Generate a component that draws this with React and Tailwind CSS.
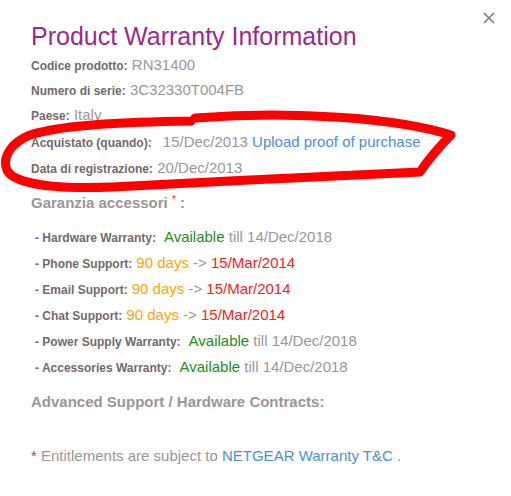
const label = "font-bold text-[12px] leading-none text-[#726a6c]";
const val = "text-[15px] leading-none text-[#9b9598]";

const Row = ({ name, children, className = "" }) => (
  <div className={`text-[15px] leading-[25px] ${className}`}>
    <span className={label}>{name}</span> {children}
  </div>
);

const Item = ({ name, children }) => (
  <li className="text-[15px] leading-[26px]">
    <span className={label}>- {name}</span>
    {children}
  </li>
);

const Available = () => (
  <>
    <span className="ml-[8px] leading-none text-[#1d8f1d]">Available</span>
    <span className={val}> till 14/Dec/2018</span>
  </>
);

const Days = () => (
  <>
    <span className="ml-[4px] leading-none text-[#ffa500]">90 days</span>
    <span className={val}> -&gt; </span>
    <span className="leading-none text-[#f52222]">15/Mar/2014</span>
  </>
);

export default function App() {
  return (
    <div className="relative w-[511px] h-[496px] bg-white overflow-hidden font-['Liberation_Sans',Arial,sans-serif]">
      <button className="absolute right-[16px] top-[12px] w-[12px] h-[12px] text-[#7b7b7b]">
        <svg viewBox="0 0 12 12" width="12" height="12" stroke="currentColor" strokeWidth="1.6" fill="none">
          <path d="M1 1 L11 11 M11 1 L1 11" />
        </svg>
      </button>

      <div className="pl-[31px] pt-[21px]">
        <h1 className="text-[25px] leading-[30px] text-[#992a90]">Product Warranty Information</h1>

        <div className="mt-[1px]">
          <Row name="Codice prodotto:">
            <span className={val}>RN31400</span>
          </Row>
          <Row name="Numero di serie:">
            <span className={val}>3C32330T004FB</span>
          </Row>
          <Row name="Paese:">
            <span className={val}>Italy</span>
          </Row>
          <Row name="Acquistato (quando):" className="mt-[2px]">
            <span className={`${val} ml-[7px]`}>15/Dec/2013</span>{" "}
            <a className="leading-none text-[#4a8fd4]">Upload proof of purchase</a>
          </Row>
          <Row name="Data di registrazione:" className="mt-[1px]">
            <span className={val}>20/Dec/2013</span>
          </Row>
        </div>

        <h2 className="mt-[13px] text-[15px] leading-[20px] font-bold text-[#9b9598]">
          Garanzia accessori <sup className="text-[#f52222] text-[10px] font-normal">*</sup> :
        </h2>

        <ul className="mt-[11px] pl-[4px]">
          <Item name="Hardware Warranty:">
            <Available />
          </Item>
          <Item name="Phone Support:">
            <Days />
          </Item>
          <Item name="Email Support:">
            <Days />
          </Item>
          <Item name="Chat Support:">
            <Days />
          </Item>
          <Item name="Power Supply Warranty:">
            <Available />
          </Item>
          <Item name="Accessories Warranty:">
            <Available />
          </Item>
        </ul>

        <h2 className="mt-[12px] text-[15px] leading-[20px] font-bold text-[#9b9598]">
          Advanced Support / Hardware Contracts:
        </h2>

        <p className="mt-[34px] text-[15px] leading-[20px] text-[#9b9598]">
          <span className="text-[#f52222]">*</span> Entitlements are subject to{" "}
          <a className="text-[#4a8fd4]">NETGEAR Warranty T&amp;C</a> .
        </p>
      </div>

      <svg
        className="absolute left-0 top-0 pointer-events-none"
        width="511"
        height="496"
        viewBox="0 0 511 496"
        fill="none"
        stroke="#ff0000"
        strokeWidth="9"
        strokeLinecap="round"
        strokeLinejoin="round"
      >
        <path d="M191 121 C130 122 65 124 30 135 C10 143 2 158 7 170 C14 185 60 189 112 187 C210 182 330 176 420 172 C428 160 438 148 451 135 C400 119 300 110 195 118" />
      </svg>
    </div>
  );
}
